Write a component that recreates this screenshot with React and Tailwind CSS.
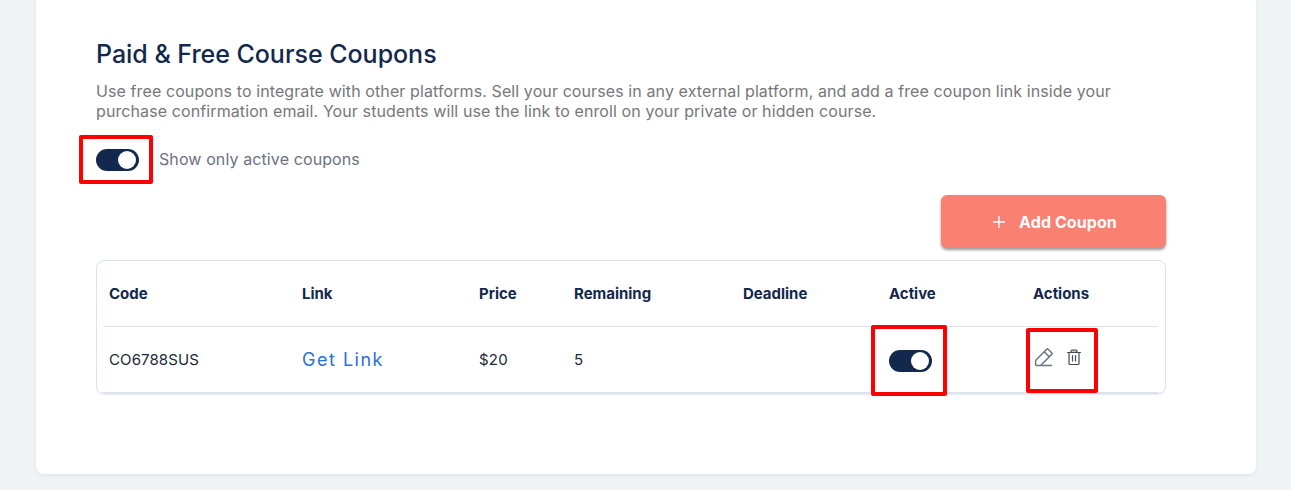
import { PiPencilSimpleLine } from "react-icons/pi";

function Toggle() {
  return (
    <button className="flex h-[22px] w-[43px] items-center justify-end rounded-full bg-[#12284c] pr-[3px]">
      <span className="size-[18px] rounded-full bg-white" />
    </button>
  );
}

function TrashIcon({ className }) {
  return (
    <svg className={className} viewBox="0 0 20 20" fill="none" stroke="currentColor" strokeWidth="1.2" strokeLinecap="round" strokeLinejoin="round">
      <path d="M3.5 5.5h13M5 5.5v11.2c0 .5.3.8.8.8h8.4c.5 0 .8-.3.8-.8V5.5M8.5 8.7v5.3M11.5 8.7v5.3" />
      <path d="M7 5.5V4c0-.6.4-1 1-1h4c.6 0 1 .4 1 1v1.5z" fill="currentColor" fillOpacity="0.35" />
    </svg>
  );
}

function Highlight({ className }) {
  return <span className={`pointer-events-none absolute rounded-[2px] border-4 border-[#ff0000] ${className}`} />;
}

const cols = "grid grid-cols-[193px_177px_95px_169px_146px_144px_1fr] items-center pl-1.5";

export default function App() {
  return (
    <div className="h-[490px] overflow-hidden bg-[#eff3f6] px-9 pr-[35px] font-['Inter',sans-serif]">
      <main className="h-[474px] rounded-b-lg bg-white pt-[38px] pl-[60px] shadow-[0_2px_4px_rgba(31,45,61,0.06)]">
        <h1 className="text-[25px] leading-8 font-medium tracking-[-0.03px] whitespace-nowrap text-[#12284c]">Paid &amp; Free Course Coupons</h1>
        <p className="mt-[11px] text-[16px] leading-5 tracking-[0.1px] whitespace-nowrap text-[#77777a]">
          Use free coupons to integrate with other platforms. Sell your courses in any external platform, and add a free coupon link inside your
          <br />
          purchase confirmation email. Your students will use the link to enroll on your private or hidden course.
        </p>
        <div className="mt-[28px] flex h-[22px] items-center gap-[20px]">
          <div className="relative">
            <Toggle />
            <Highlight className="-top-[14px] -left-[17px] h-[49px] w-[74px]" />
          </div>
          <span className="-mt-0.5 text-[16px] leading-5 tracking-[0.107px] text-[#6b7280]">Show only active coupons</span>
        </div>
        <div className="mt-6 flex w-[1070px] justify-end">
          <button className="flex h-[53px] w-[225px] items-center justify-center gap-[14px] rounded-md bg-[#fa8072] pl-[3px] text-[16px] font-bold tracking-[0.08px] text-white shadow-[0_2px_3px_rgba(0,0,0,0.4)]">
            <svg className="size-3" viewBox="0 0 12 12" stroke="currentColor" strokeWidth="1.4">
              <path d="M6 0v12M0 6h12" />
            </svg>
            Add Coupon
          </button>
        </div>
        <section className="mt-3 h-[134px] w-[1070px] rounded-lg border border-[#dde2ec] pr-[7px] pl-1.5 shadow-[0_1px_1px_rgba(200,208,224,0.4)]">
          <div className={`${cols} h-[66px] border-b border-[#dde2ec] pt-px text-[15px] font-bold tracking-[-0.02px] text-[#12284c]`}>
            <span>Code</span><span>Link</span><span>Price</span><span>Remaining</span><span>Deadline</span><span>Active</span><span>Actions</span>
          </div>
          <div className={`${cols} h-[66px] border-b border-[#dde2ec] pt-px text-[15px] text-[#212936]`}>
            <span className="tracking-[0.1px]">CO6788SUS</span>
            <a className="-mt-0.5 text-[18px] tracking-[1.5px] text-[#2b6fdb]">Get Link</a>
            <span className="tracking-[0.2px]">$20</span>
            <span>5</span>
            <span />
            <div className="relative mt-[2px]">
              <Toggle />
              <Highlight className="-top-[25px] -left-[18px] h-[71px] w-[76px]" />
            </div>
            <div className="relative -mt-[6px] flex h-6 items-center gap-[9px]">
              <PiPencilSimpleLine className="-ml-[1px] size-[23px] text-[#6b7280]" />
              <TrashIcon className="size-5 text-[#444b58]" />
              <Highlight className="-top-[17px] -left-[7px] h-[65px] w-[72px]" />
            </div>
          </div>
        </section>
      </main>
    </div>
  );
}
